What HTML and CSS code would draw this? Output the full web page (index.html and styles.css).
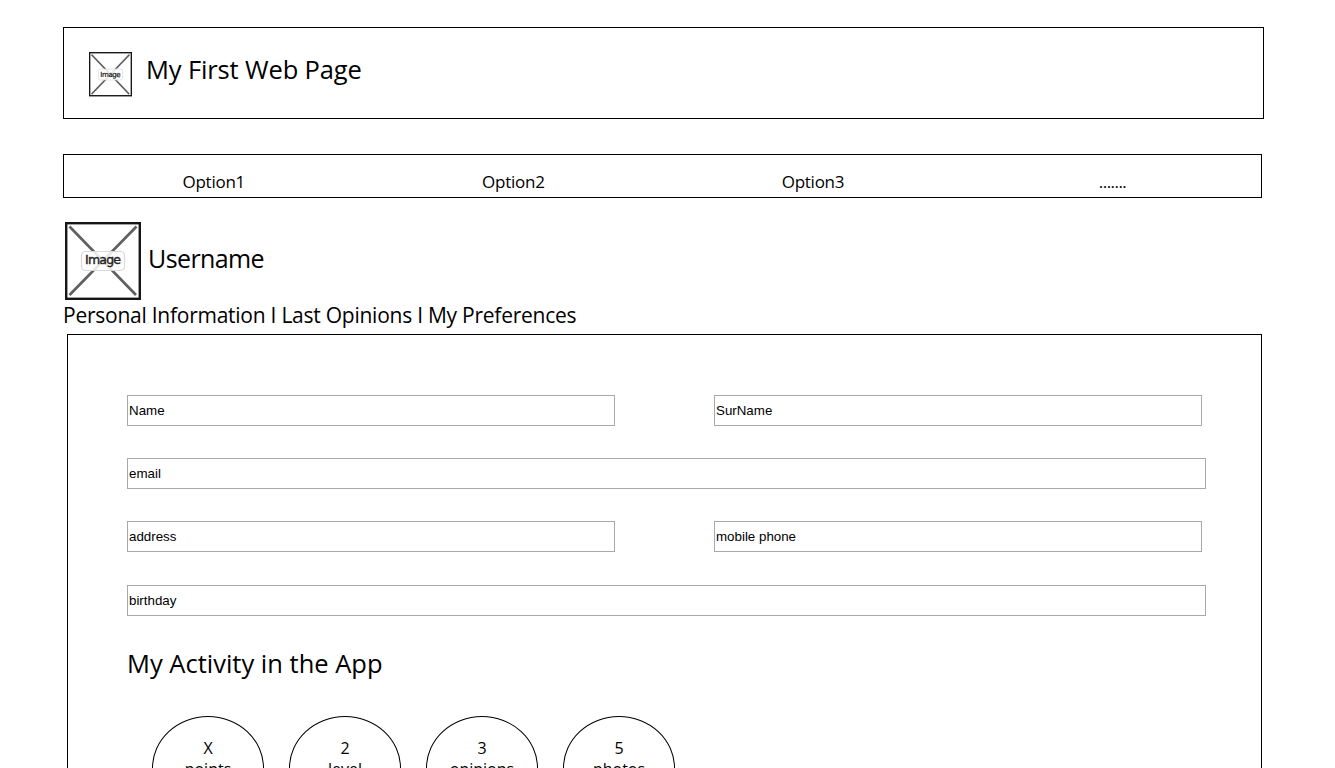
FILE: index.html
```html
<!DOCTYPE html>
<html lang="en">
<head>
<meta charset="utf-8">
<title>My First Web Page</title>
<link rel="stylesheet" href="styles.css">
</head>
<body>
<header class="header">
  <svg class="logo" viewBox="0 0 76 78" preserveAspectRatio="none">
    <rect class="frame" x="1.2" y="1.2" width="73.6" height="74.6"/>
    <path class="cross" d="M4.5 4.5L71 73M71.500 4.500L4.500 73"/>
    <rect class="plate" x="16.500" y="29.500" width="43" height="19" rx="4"/>
    <text class="caption" x="38" y="42.500" textLength="36">Image</text>
  </svg>
  <h1 class="title">My First Web Page</h1>
</header>
<nav class="nav">
  <a>Option1</a><a>Option2</a><a>Option3</a><a class="more">.......</a>
</nav>
<section class="user">
  <svg class="avatar" viewBox="0 0 76 78">
    <rect class="frame" x="1.2" y="1.2" width="73.6" height="75.6"/>
    <path class="cross" d="M4.5 4.5L71 73M71.5 4.5L4.5 73"/>
    <rect class="plate" x="16.5" y="29.5" width="43" height="19" rx="4"/>
    <text class="caption" x="38" y="42" textLength="36">Image</text>
  </svg>
  <h2 class="username">Username</h2>
</section>
<div class="tabs">Personal Information I Last Opinions I My Preferences</div>
<main class="panel">
  <form class="form">
    <div class="row"><input class="field" value="Name"><input class="field" value="SurName"></div>
    <div class="row"><input class="field wide" value="email"></div>
    <div class="row"><input class="field" value="address"><input class="field" value="mobile phone"></div>
    <div class="row last"><input class="field wide" value="birthday"></div>
  </form>
  <h2 class="activity">My Activity in the App</h2>
  <div class="stats">
    <div class="stat"><span>X</span><span>points</span></div>
    <div class="stat"><span>2</span><span>level</span></div>
    <div class="stat"><span>3</span><span>opinions</span></div>
    <div class="stat"><span>5</span><span>photos</span></div>
  </div>
</main>
</body>
</html>
```
FILE: styles.css
```css
* { box-sizing: border-box; }
body {
  margin: 0;
  height: 768px;
  overflow: hidden;
  padding: 27px 0 0 63px;
  background: #fff;
  color: #000;
  font-family: "Segoe UI", "Open Sans", "Noto Sans", sans-serif;
}
h1, h2 { margin: 0; font-weight: 400; white-space: nowrap; }
.header {
  display: flex;
  width: 1201px;
  height: 92px;
  border: 1px solid #000;
  padding: 23px 0 0 25px;
}
.logo { width: 43px; height: 45px; margin: 1px 14px 0 0; }
.title { font-size: 25.5px; line-height: 36px; letter-spacing: -.13px; }
.frame { fill: #fff; stroke: #161616; stroke-width: 2.4; }
.cross { fill: none; stroke: #606060; stroke-width: 2.7; }
.plate { fill: #fff; fill-opacity: .85; stroke: #d8d8d8; stroke-width: 1.2; }
.caption { font: 12.5px "DejaVu Sans", sans-serif; fill: #222; stroke: #222; stroke-width: .4; text-anchor: middle; }
.nav {
  display: grid;
  grid-template-columns: repeat(4, 299.6px);
  width: 1199px;
  height: 44px;
  margin-top: 35px;
  border: 1px solid #000;
  padding-top: 15px;
  text-align: center;
  font-size: 17px;
  line-height: 24px;
  letter-spacing: -.25px;
}
.more { letter-spacing: -.55px; }
.user { display: flex; margin: 24px 0 0 2px; height: 78px; }
.avatar { width: 76px; height: 78px; margin-right: 7px; }
.username { font-size: 25px; line-height: 36px; padding-top: 18px; letter-spacing: -.6px; }
.tabs { height: 34px; font-size: 21px; line-height: 30px; white-space: nowrap; letter-spacing: -.25px; }
.panel {
  width: 1195px;
  height: 600px;
  margin-left: 4px;
  border: 1px solid #000;
  padding: 60px 0 0 59px;
}
.row { display: flex; gap: 99px; margin-bottom: 32px; }
.row.last { margin: 33px 0 0; }
.field {
  width: 488px;
  height: 31px;
  border: 1px solid #a9a9a9;
  border-radius: 0;
  padding: 1px;
  background: #fff;
  color: #000;
  font: 13.33px "Liberation Sans", Arial, sans-serif;
}
.field.wide { width: 1079px; }
.activity { margin-top: 29px; font-size: 25.5px; line-height: 36px; }
.stats { display: flex; gap: 25px; margin: 35px 0 0 25px; }
.stat {
  width: 112px;
  height: 104px;
  border: 1px solid #000;
  border-radius: 50%;
  padding-top: 21px;
  display: flex;
  flex-direction: column;
  align-items: center;
  font-size: 16px;
  line-height: 21px;
}
```
